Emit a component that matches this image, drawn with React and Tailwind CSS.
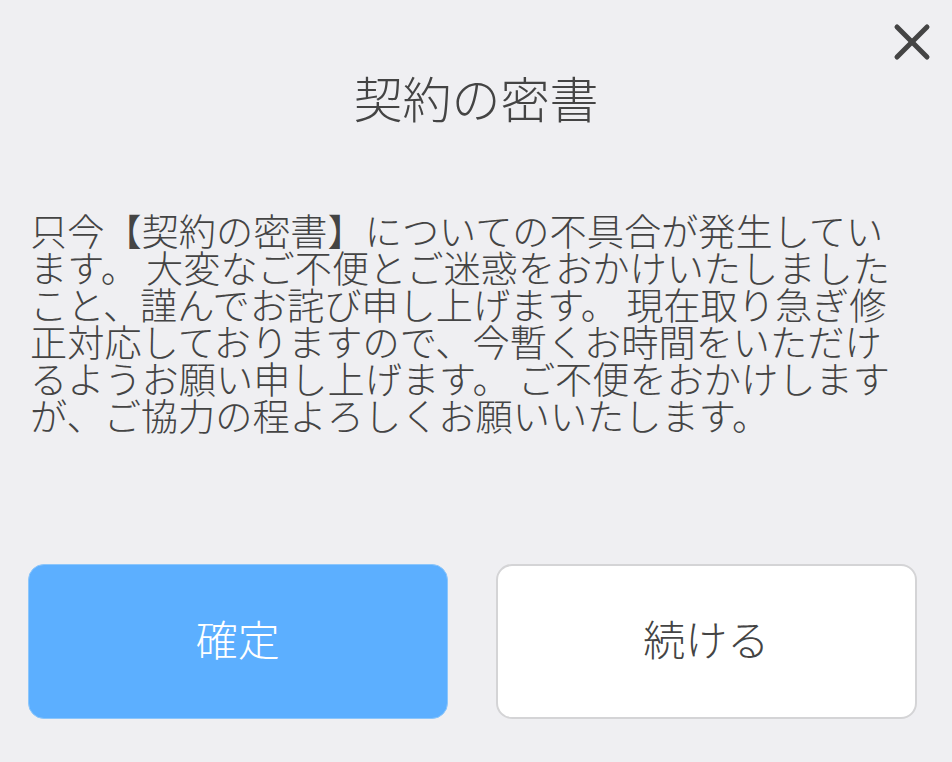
import { X } from 'lucide-react';

const font = { fontFamily: '"Noto Sans CJK JP", "Noto Sans", sans-serif' };

function App() {
  return (
    <div className="w-[952px] h-[762px] bg-[#efeff2] text-[#444] relative overflow-hidden" style={font}>
      {/* 閉じる */}
      <button className="absolute right-[10px] top-[12px] text-[#444]">
        <X size={60} strokeWidth={2} />
      </button>

      <h1 className="pt-[67px] text-center text-[49px] leading-[60px] font-light">契約の密書</h1>

      <p className="mt-[85px] pl-[30px] w-[905px] text-[37.2px] leading-[37px] font-light">
        只今【契約の密書】についての不具合が発生しています。 大変なご不便とご迷惑をおかけいたしましたこと、謹んでお詫び申し上げます。 現在取り急ぎ修正対応しておりますので、今暫くお時間をいただけるようお願い申し上げます。 ご不便をおかけしますが、ご協力の程よろしくお願いいたします。
      </p>

      <div className="absolute left-0 right-0 top-[564px] flex gap-[48px] pl-[28px] pr-[35px]">
        <button className="flex-1 h-[155px] pb-[8px] rounded-[16px] bg-[#5cafff] border border-[#8cc6fb] text-white text-[42px] font-light">
          確定
        </button>
        <button className="flex-1 h-[155px] pb-[8px] rounded-[16px] bg-white border-2 border-[#d4d4d6] text-[#444] text-[42px] font-light">
          続ける
        </button>
      </div>
    </div>
  );
}

export default App;
